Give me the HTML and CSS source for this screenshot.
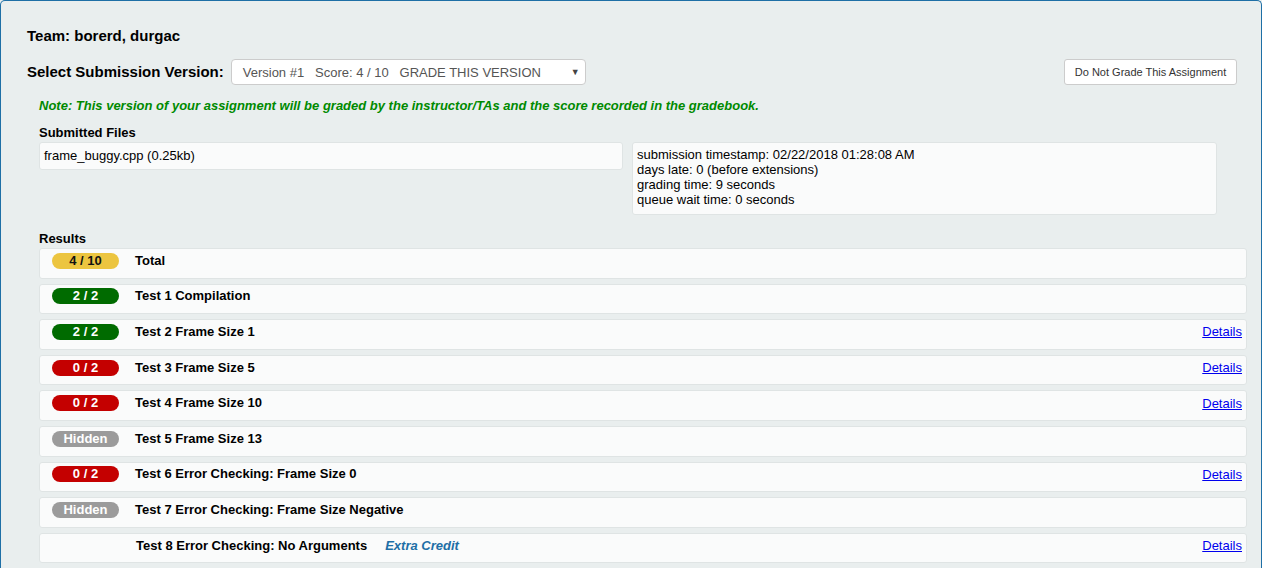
FILE: index.html
```html
<!DOCTYPE html>
<html>
<head>
<meta charset="utf-8">
<title>Submission</title>
<link rel="stylesheet" href="styles.css">
</head>
<body>
<div class="page">
  <h2 class="team">Team: borerd, durgac</h2>
  <div class="select-row">
    <span class="select-label">Select Submission Version:</span>
    <div class="select">
      <span class="select-text">Version #1   Score: 4 / 10   GRADE THIS VERSION</span>
      <span class="caret">▼</span>
    </div>
    <button class="btn">Do Not Grade This Assignment</button>
  </div>
  <div class="inner">
    <p class="note">Note: This version of your assignment will be graded by the instructor/TAs and the score recorded in the gradebook.</p>
    <h4 class="section-title">Submitted Files</h4>
    <div class="files-grid">
      <div class="box files-box">frame_buggy.cpp (0.25kb)</div>
      <div class="box info-box">
        <div>submission timestamp: 02/22/2018 01:28:08 AM</div>
        <div>days late: 0 (before extensions)</div>
        <div>grading time: 9 seconds</div>
        <div>queue wait time: 0 seconds</div>
      </div>
    </div>
    <h4 class="section-title results-title">Results</h4>
    <div class="results">
      <div class="row"><span class="badge yellow">4 / 10</span><span class="title">Total</span></div>
      <div class="row"><span class="badge green">2 / 2</span><span class="title">Test 1 Compilation</span></div>
      <div class="row"><span class="badge green">2 / 2</span><span class="title">Test 2 Frame Size 1</span><a class="details" href="#">Details</a></div>
      <div class="row"><span class="badge red">0 / 2</span><span class="title">Test 3 Frame Size 5</span><a class="details" href="#">Details</a></div>
      <div class="row"><span class="badge red">0 / 2</span><span class="title">Test 4 Frame Size 10</span><a class="details" href="#">Details</a></div>
      <div class="row"><span class="badge gray">Hidden</span><span class="title">Test 5 Frame Size 13</span></div>
      <div class="row"><span class="badge red">0 / 2</span><span class="title">Test 6 Error Checking: Frame Size 0</span><a class="details" href="#">Details</a></div>
      <div class="row"><span class="badge gray">Hidden</span><span class="title">Test 7 Error Checking: Frame Size Negative</span></div>
      <div class="row"><span class="badge empty"></span><span class="title shift">Test 8 Error Checking: No Arguments</span><span class="extra">Extra Credit</span><a class="details" href="#">Details</a></div>
      <div class="row"></div>
    </div>
  </div>
</div>
</body>
</html>
```
FILE: styles.css
```css
html, body {
  margin: 0;
  padding: 0;
  overflow: hidden;
  background: #e9eeee;
}
body {
  font-family: "Liberation Sans", Arial, sans-serif;
  color: #000;
}
.page {
  box-sizing: border-box;
  min-height: 620px;
  border: 1px solid #1e6fa6;
  border-bottom: none;
  border-radius: 5px 5px 0 0;
  background: #e9eeee;
  padding: 26px 14px 0 26px;
}
.team {
  margin: 0;
  font-size: 15px;
  line-height: 18px;
  font-weight: bold;
}
.select-row {
  display: flex;
  align-items: center;
  margin-top: 14px;
  height: 26px;
}
.select-label {
  font-size: 15px;
  font-weight: bold;
  line-height: 18px;
}
.select {
  box-sizing: border-box;
  margin-left: 7px;
  width: 355px;
  height: 26px;
  border: 1px solid #cccccc;
  border-radius: 4px;
  background: #fff;
  display: flex;
  align-items: center;
  padding: 0 5px 0 11px;
  color: #555;
  font-size: 13px;
}
.select-text {
  white-space: pre;
  flex: 1;
}
.caret {
  font-size: 9px;
  color: #444;
}
.btn {
  margin-left: auto;
  margin-right: 10px;
  box-sizing: border-box;
  width: 173px;
  height: 26px;
  border: 1px solid #cccccc;
  border-radius: 3px;
  background: #fff;
  color: #333;
  font-family: "Liberation Sans", Arial, sans-serif;
  font-size: 11px;
  padding: 0;
}
.inner {
  padding-left: 12px;
}
.note {
  margin: 13px 0 0;
  font-size: 13px;
  line-height: 16px;
  font-weight: bold;
  font-style: italic;
  color: #008a00;
}
.section-title {
  margin: 11px 0 0;
  font-size: 13px;
  line-height: 15px;
  font-weight: bold;
}
.results-title {
  margin-top: 16px;
}
.files-grid {
  display: grid;
  grid-template-columns: 584px 585px;
  column-gap: 9px;
  align-items: start;
  margin-top: 2px;
}
.box {
  box-sizing: border-box;
  background: #fafbfb;
  border: 1px solid #dfe4e4;
  border-radius: 3px;
  font-size: 13px;
  line-height: 15px;
}
.files-box {
  height: 28px;
  padding: 5px 4px;
}
.info-box {
  height: 73px;
  padding: 4px 4px;
}
.results {
  margin-top: 2px;
}
.row {
  box-sizing: border-box;
  display: flex;
  align-items: center;
  height: 30.6px;
  margin-bottom: 5px;
  padding: 4px 4px 9px 12px;
  background: #fafbfb;
  border: 1px solid #dfe4e4;
  border-radius: 3px;
  font-size: 13px;
}
.badge {
  box-sizing: border-box;
  flex: none;
  width: 67px;
  height: 16px;
  border-radius: 8px;
  text-align: center;
  font-weight: bold;
  font-size: 13px;
  line-height: 16px;
  color: #fff;
}
.yellow { background: #ecc540; color: #111; }
.green { background: #006b00; }
.red { background: #c40000; }
.gray { background: #9b9b9b; }
.empty { background: transparent; }
.title {
  margin-left: 16px;
  font-weight: bold;
  line-height: 16px;
}
.title.shift {
  margin-left: 17px;
}
.extra {
  margin-left: 18px;
  color: #1e6fa6;
  font-weight: bold;
  font-style: italic;
}
.details {
  margin-left: auto;
  color: #0000ee;
  text-decoration: underline;
}
```
